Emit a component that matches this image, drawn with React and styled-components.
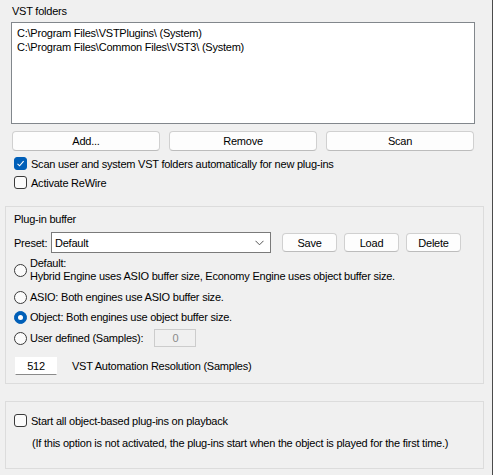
import React from "react";
import styled, { createGlobalStyle } from "styled-components";

const GlobalStyle = createGlobalStyle`
  body {
    margin: 0;
    background: #f0f0f0;
  }
`;

const Page = styled.div`
  width: 493px;
  height: 475px;
  box-sizing: border-box;
  border-right: 1px solid #4b4b4b;
  background: #f0f0f0;
  font-family: Tahoma, "Liberation Sans", Arial, sans-serif;
  font-size: 11px;
  letter-spacing: -0.23px;
  color: #000;
  padding: 4px 0 0 0;
  overflow: hidden;
`;

const Folders = styled.div`
  padding: 0 17px 0 11px;
`;

const Title = styled.div`
  line-height: 14px;
  height: 14px;
  padding-left: ${(p) => p.$indent ?? 1}px;
`;

const ListBox = styled.div`
  margin-top: 4px;
  height: 102px;
  box-sizing: border-box;
  border: 1px solid #82878c;
  background: #fff;
  padding: 3px 0 0 5px;
`;

const ListItem = styled.div`
  line-height: 14px;
  height: 14px;
  white-space: nowrap;
`;

const ButtonRow = styled.div`
  display: grid;
  grid-template-columns: repeat(3, 1fr);
  gap: 9px;
  margin: 7px 1px 0 1px;
`;

const Button = styled.button`
  height: ${(p) => p.$h || 20}px;
  width: ${(p) => (p.$w ? `${p.$w}px` : "auto")};
  box-sizing: border-box;
  border: 1px solid #d0d0d0;
  border-bottom-color: #bcbcbc;
  border-radius: 4px;
  background: #fdfdfd;
  font: inherit;
  letter-spacing: inherit;
  color: #000;
  padding: 0;
`;

const CheckRow = styled.label`
  display: flex;
  align-items: center;
  gap: 4px;
  height: 19px;
  padding-left: ${(p) => p.$indent ?? 3}px;
  white-space: nowrap;
`;

const Box = styled.span`
  width: 13px;
  height: 13px;
  box-sizing: border-box;
  border-radius: 3px;
  flex: none;
  display: flex;
  align-items: center;
  justify-content: center;
  border: 1px solid ${(p) => (p.$checked ? "#005fb8" : "#3a3a3a")};
  background: ${(p) => (p.$checked ? "#005fb8" : "#fbfbfb")};
`;

const Checks = styled.div`
  margin-top: 3px;
`;

const Group = styled.div`
  margin: ${(p) => p.$top}px 8px 0 5px;
  height: ${(p) => p.$h}px;
  box-sizing: border-box;
  border: 1px solid #dcdcdc;
  padding: ${(p) => p.$pad || "5px 0 0 8px"};
`;

const PresetRow = styled.div`
  display: flex;
  align-items: center;
  margin-top: 6px;
  height: 21px;
`;

const PresetLabel = styled.span`
  width: 37px;
`;

const Combo = styled.div`
  width: 220px;
  height: 21px;
  box-sizing: border-box;
  border: 1px solid #7a7a7a;
  background: #fff;
  display: flex;
  align-items: center;
  justify-content: space-between;
  padding: 0 6px 0 3px;
`;

const SmallButtons = styled.div`
  display: flex;
  gap: 7px;
  margin-left: 11px;
`;

const Radios = styled.div`
  margin-top: 4px;
`;

const RadioRow = styled.label`
  display: flex;
  align-items: center;
  gap: 3px;
  height: ${(p) => p.$h || 20}px;
  margin-top: ${(p) => p.$mt || 0}px;
  white-space: nowrap;
`;

const Circle = styled.span`
  width: 13px;
  height: 13px;
  box-sizing: border-box;
  border-radius: 50%;
  flex: none;
  display: flex;
  align-items: center;
  justify-content: center;
  border: 1px solid ${(p) => (p.$checked ? "#005fb8" : "#3a3a3a")};
  background: ${(p) => (p.$checked ? "#005fb8" : "#fbfbfb")};

  &::after {
    content: "";
    display: ${(p) => (p.$checked ? "block" : "none")};
    width: 5px;
    height: 5px;
    border-radius: 50%;
    background: #fff;
  }
`;

const TwoLines = styled.span`
  line-height: 13px;
`;

const NumField = styled.div`
  width: 42px;
  height: 18px;
  box-sizing: border-box;
  display: flex;
  align-items: center;
  justify-content: center;
  margin-left: ${(p) => p.$ml || 0}px;
  background: ${(p) => (p.$disabled ? "#f0f0f0" : "#fff")};
  color: ${(p) => (p.$disabled ? "#8a8a8a" : "#000")};
  border: 1px solid ${(p) => (p.$disabled ? "#cccccc" : "#fff")};
  border-bottom-color: ${(p) => (p.$disabled ? "#cccccc" : "#8a8a8a")};
`;

const ResolutionRow = styled.div`
  display: flex;
  align-items: center;
  gap: 15px;
  margin: 8px 0 0 1px;
`;

const Note = styled.div`
  margin: 6px 0 0 18px;
  line-height: 14px;
  white-space: nowrap;
`;

const Tick = () => (
  <svg width="9" height="9" viewBox="0 0 9 9">
    <path d="M1.5 4.8 L3.6 6.8 L7.6 2.2" fill="none" stroke="#fff" strokeWidth="1.1" />
  </svg>
);

const Chevron = () => (
  <svg width="9" height="6" viewBox="0 0 9 6">
    <path d="M0.5 0.8 L4.5 4.8 L8.5 0.8" fill="none" stroke="#555" strokeWidth="1" />
  </svg>
);

const Check = ({ checked, children, indent }) => (
  <CheckRow $indent={indent}>
    <Box $checked={checked}>{checked && <Tick />}</Box>
    <span>{children}</span>
  </CheckRow>
);

const Radio = ({ checked, children, h, mt }) => (
  <RadioRow $h={h} $mt={mt}>
    <Circle $checked={checked} />
    {children}
  </RadioRow>
);

export default function App() {
  return (
    <Page>
      <GlobalStyle />
      <Folders>
        <Title>VST folders</Title>
        <ListBox>
          <ListItem>C:\Program Files\VSTPlugins\ (System)</ListItem>
          <ListItem>C:\Program Files\Common Files\VST3\ (System)</ListItem>
        </ListBox>
        <ButtonRow>
          <Button>Add...</Button>
          <Button>Remove</Button>
          <Button>Scan</Button>
        </ButtonRow>
        <Checks>
          <Check checked>Scan user and system VST folders automatically for new plug-ins</Check>
          <Check>Activate ReWire</Check>
        </Checks>
      </Folders>

      <Group $top={14} $h={178}>
        <Title $indent={0}>Plug-in buffer</Title>
        <PresetRow>
          <PresetLabel>Preset:</PresetLabel>
          <Combo>
            <span>Default</span>
            <Chevron />
          </Combo>
          <SmallButtons>
            <Button $w={55} $h={19}>Save</Button>
            <Button $w={55} $h={19}>Load</Button>
            <Button $w={55} $h={19}>Delete</Button>
          </SmallButtons>
        </PresetRow>
        <Radios>
          <Radio h={26}>
            <TwoLines>
              Default:
              <br />
              Hybrid Engine uses ASIO buffer size, Economy Engine uses object buffer size.
            </TwoLines>
          </Radio>
          <Radio mt={4}>ASIO: Both engines use ASIO buffer size.</Radio>
          <Radio checked>Object: Both engines use object buffer size.</Radio>
          <Radio h={22}>
            User defined (Samples):
            <NumField $disabled $ml={8}>0</NumField>
          </Radio>
        </Radios>
        <ResolutionRow>
          <NumField>512</NumField>
          <span>VST Automation Resolution (Samples)</span>
        </ResolutionRow>
      </Group>

      <Group $top={17} $h={68} $pad="9px 0 0 8px">
        <Check indent={0}>Start all object-based plug-ins on playback</Check>
        <Note>(If this option is not activated, the plug-ins start when the object is played for the first time.)</Note>
      </Group>
    </Page>
  );
}
